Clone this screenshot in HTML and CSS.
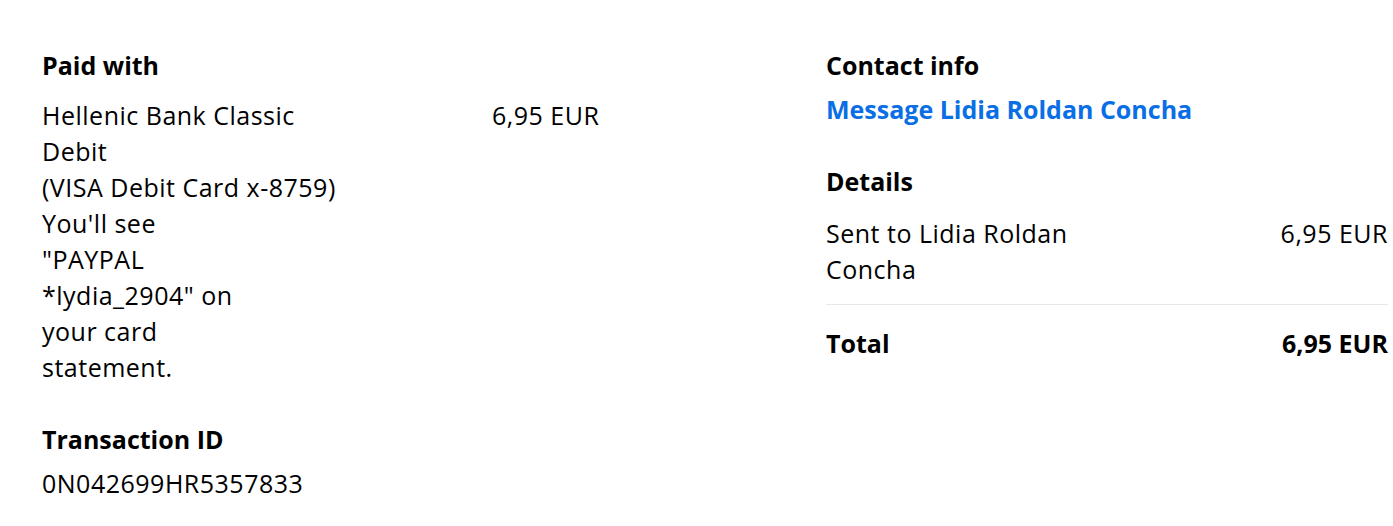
FILE: index.html
```html
<!DOCTYPE html>
<html lang="en">
<head>
<meta charset="utf-8">
<title>Transaction details</title>
<link rel="stylesheet" href="styles.css">
</head>
<body>
<main class="page">
  <section class="col col-left">
    <div class="block">
      <h2 class="heading">Paid with</h2>
      <div class="paid-row">
        <div class="paid-text">
          <span class="line">Hellenic Bank Classic</span>
          <span class="line">Debit</span>
          <span class="line">(VISA Debit Card x-8759)</span>
          <span class="line">You'll see</span>
          <span class="line">"PAYPAL</span>
          <span class="line">*lydia_2904" on</span>
          <span class="line">your card</span>
          <span class="line">statement.</span>
        </div>
        <div class="paid-amount">6,95 EUR</div>
      </div>
    </div>
    <div class="block block-spaced">
      <h2 class="heading">Transaction ID</h2>
      <p class="value">0N042699HR5357833</p>
    </div>
  </section>
  <section class="col col-right">
    <div class="block">
      <h2 class="heading">Contact info</h2>
      <a class="link" href="#">Message Lidia Roldan Concha</a>
    </div>
    <div class="block block-spaced">
      <h2 class="heading">Details</h2>
      <div class="detail-row">
        <div class="detail-label">
          <span class="line">Sent to Lidia Roldan</span>
          <span class="line">Concha</span>
        </div>
        <div class="detail-amount">6,95 EUR</div>
      </div>
      <div class="total-row">
        <div class="total-label">Total</div>
        <div class="total-amount">6,95 EUR</div>
      </div>
    </div>
  </section>
</main>
</body>
</html>
```
FILE: styles.css
```css
* {
  box-sizing: border-box;
}

html, body {
  margin: 0;
  padding: 0;
  background: #ffffff;
}

body {
  font-family: "Open Sans", "Liberation Sans", sans-serif;
  font-size: 25px;
  line-height: 36px;
  letter-spacing: 0.5px;
  color: #000000;
}

.page {
  display: grid;
  grid-template-columns: 784px 562px;
  padding: 47px 0 0 42px;
}

.heading {
  margin: 0;
  font-size: 25px;
  line-height: 36px;
  font-weight: 700;
  letter-spacing: 0;
}

.block-spaced {
  margin-top: 36px;
}

.paid-row {
  display: grid;
  grid-template-columns: 450px auto;
  margin-top: 14px;
}

.line {
  display: block;
}

.value {
  margin: 8px 0 0;
}

.link {
  display: block;
  margin-top: 8px;
  color: #0a6fe5;
  font-weight: 700;
  letter-spacing: 0;
  text-decoration: none;
}

.detail-row {
  display: flex;
  justify-content: space-between;
  margin-top: 16px;
  padding-bottom: 17px;
  border-bottom: 1px solid #e9e7e2;
}

.total-row {
  display: flex;
  justify-content: space-between;
  margin-top: 20px;
  font-weight: 700;
  letter-spacing: 0;
}
```
